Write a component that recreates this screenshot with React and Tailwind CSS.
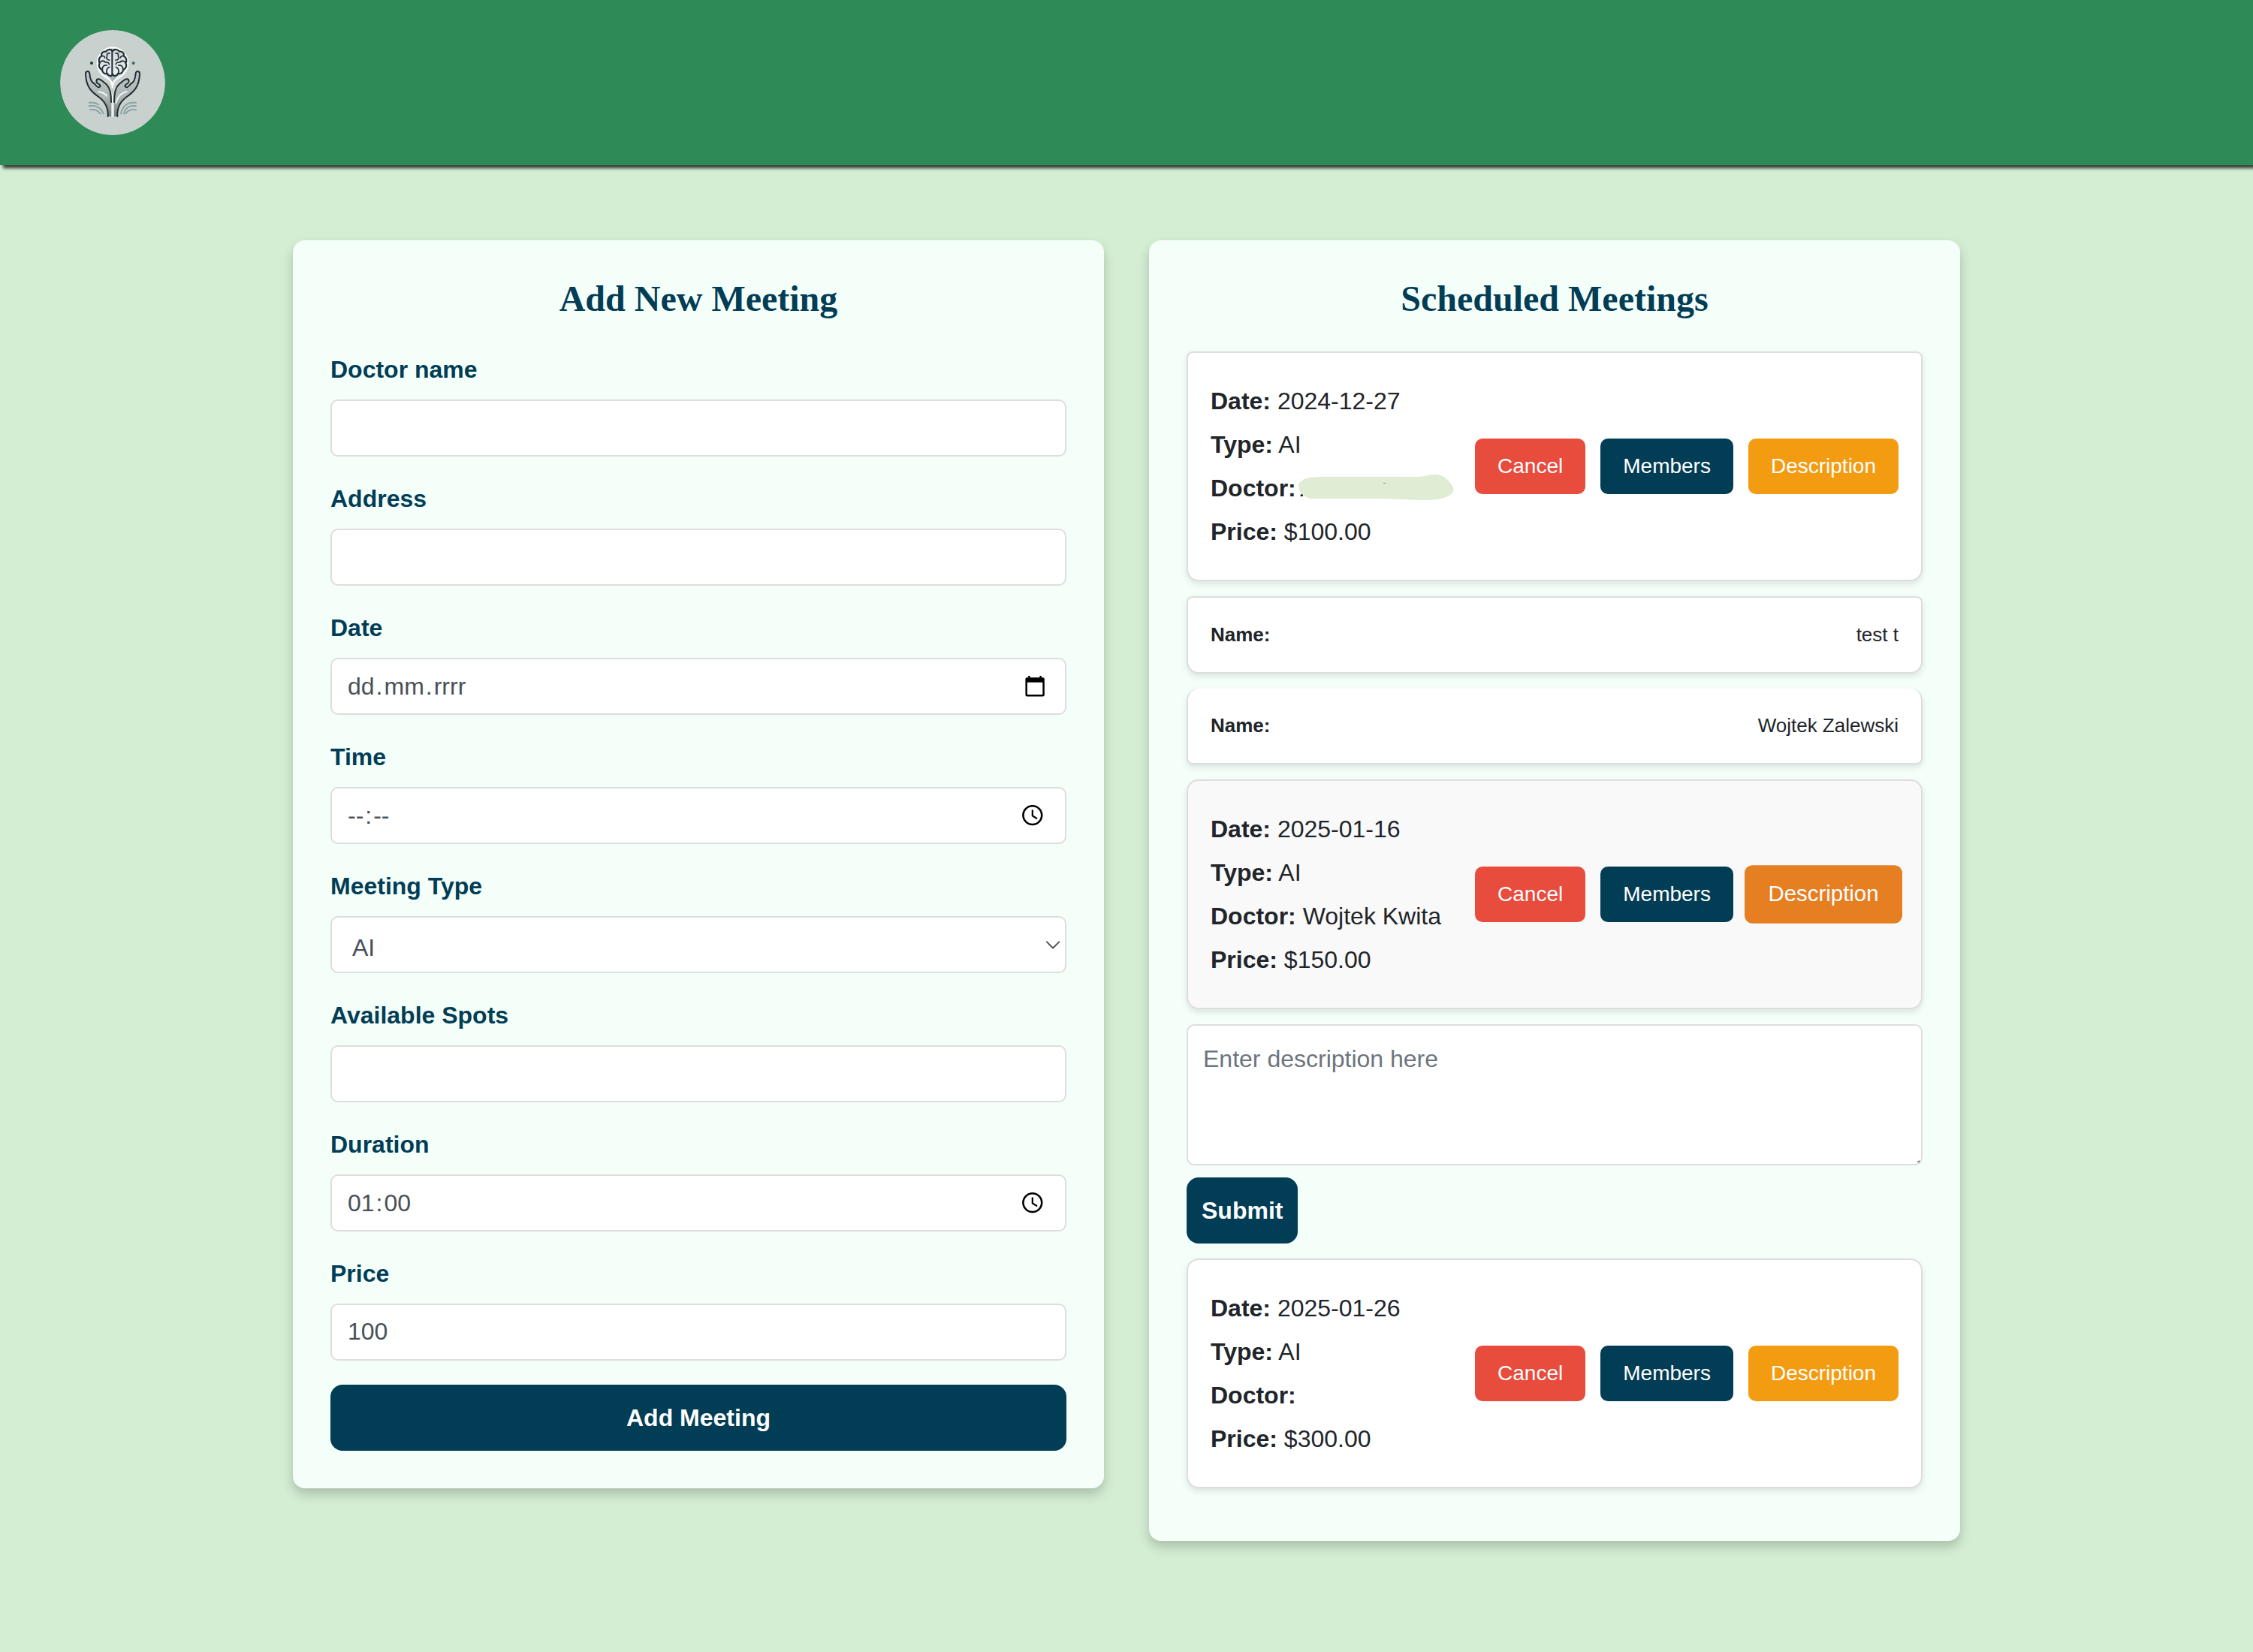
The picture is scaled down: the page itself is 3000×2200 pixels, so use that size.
import React from "react";

function Logo() {
  return (
    <svg viewBox="60 60 420 420" className="block size-[140px] rounded-full" fill="none" strokeLinecap="round" strokeLinejoin="round">
      <defs>
        <linearGradient id="arm" x1="0" y1="0" x2="0" y2="1">
          <stop offset="0" stopColor="#c3cac9" />
          <stop offset="0.6" stopColor="#aab4b3" />
          <stop offset="1" stopColor="#6f7b7c" />
        </linearGradient>
        <linearGradient id="brain" x1="0" y1="0" x2="0" y2="1">
          <stop offset="0" stopColor="#d3d8db" />
          <stop offset="1" stopColor="#eef0f2" />
        </linearGradient>
      </defs>
      <circle cx="270" cy="270" r="210" fill="#c9d1cf" />
      <path d="M270 130C240 130 209 158 209 192C209 226 235 245 252 254C262 261 268 272 269 289C271 272 277 261 288 254C305 245 331 226 331 192C331 158 300 130 270 130Z" fill="#d5dadb" stroke="#fff" strokeWidth="6" />
      <path d="M254 246L286 246L270 266Z" fill="#a9b2bc" />
      <path d="M270 144C262 134 248 137 243 146C231 144 223 153 226 163C214 170 213 184 218 191C213 203 217 215 228 219C229 231 240 237 249 234C254 246 268 245 270 236C272 245 286 246 291 234C300 237 311 231 312 219C323 215 328 203 322 191C328 184 326 170 314 163C317 153 309 144 297 146C292 137 278 134 270 144Z" fill="url(#brain)" stroke="#1d2f36" strokeWidth="6.5" />
      <g stroke="#1d2f36" strokeWidth="5">
        <path d="M268 142V238" strokeWidth="6" />
        <path d="M258 153C249 151 246 158 248 164C243 172 248 181 257 180" />
        <path d="M226 164C233 162 239 166 239 171M218 191C224 181 236 181 241 189C249 187 255 191 256 197M229 218C227 206 236 199 247 201M248 234C243 225 246 212 257 208" />
        <path d="M282 153C291 151 294 158 292 164C297 172 292 181 282 180" />
        <path d="M314 164C307 162 301 166 301 171M322 191C316 181 304 181 299 189C291 187 284 191 283 197M311 218C313 206 304 199 293 201M292 234C297 225 294 212 283 208" />
      </g>
      <circle cx="186" cy="192" r="6" fill="#17343c" />
      <circle cx="353" cy="192" r="6" fill="#41636a" />
      <path d="M250 405C252 375 243 348 214 327C185 306 164 287 162 236C162 222 176 221 178 234C179 252 184 269 199 276L214 289C222 289 224 284 219 278L205 268C198 259 206 250 216 255L245 277C260 291 264 312 264 345V405Z" fill="url(#arm)" />
      <path d="M290 405C288 375 297 348 326 327C355 306 376 287 378 236C378 222 363 221 362 234C361 252 356 269 341 276L326 289C318 289 316 284 321 278L335 268C342 259 334 250 324 255L295 277C280 291 276 312 276 345V405Z" fill="url(#arm)" />
      <path d="M270 320V404" stroke="#eef1f1" strokeWidth="7" />
      <path d="M214 306C229 309 240 314 246 323M284 350C289 328 304 311 326 306" stroke="#f3f5f5" strokeWidth="6" />
      <g stroke="#232c30" strokeWidth="6">
        <path d="M251 405C253 372 243 348 214 327C185 306 164 287 162 236C162 222 176 221 178 234C179 252 184 269 199 276C205 284 211 292 217 288C224 284 219 277 211 274C203 270 203 256 213 256C224 256 234 270 245 277C260 291 264 312 264 348" />
        <path d="M289 405C287 372 297 348 326 327C355 306 376 287 378 236C378 222 363 221 362 234C361 252 356 269 341 276C335 284 329 292 323 288C316 284 321 277 329 274C337 270 337 256 327 256C316 256 306 270 295 277C280 291 276 312 276 348" />
      </g>
      <g stroke="#8ba5a3" strokeWidth="6">
        <path d="M176 350H194C203 351 209 354 214 359M176 363H196C214 366 226 377 233 394M180 378H194C205 379 213 384 220 394" />
        <path d="M363 350H346C322 352 307 371 303 394M363 363H346C332 365 319 375 315 394M363 378H350C338 379 328 385 322 394" />
      </g>
    </svg>
  );
}

const CalendarIcon = () => (
  <svg viewBox="0 0 26 28" className="mr-[27px] h-7 w-[26px]">
    <path d="M4.2 0h2.4v2.2h12.8V0h2.4v2.2h1.9a2.1 2.1 0 0 1 2.1 2.1v21.1a2.1 2.1 0 0 1-2.1 2.1H2.5a2.1 2.1 0 0 1-2.1-2.1V4.3a2.1 2.1 0 0 1 2.1-2.1h1.7zM2.9 8.7v16.2h20.4V8.7z" fill="#000" />
  </svg>
);

const ClockIcon = () => (
  <svg viewBox="0 0 28 28" className="mr-[29px] size-7" fill="none" stroke="#000">
    <circle cx="13.8" cy="13.6" r="12.4" strokeWidth="2.6" />
    <path d="M13.8 6.6V14.4L20 18.2" strokeWidth="2.2" />
  </svg>
);

const ChevronIcon = () => (
  <svg viewBox="0 0 20 12" className="mr-[6px] h-3 w-5" fill="none" stroke="#495057" strokeWidth="1.9" strokeLinecap="round" strokeLinejoin="round">
    <path d="M1.9 2.3L10.1 10.5L18.3 2.3" />
  </svg>
);

const Segments = ({ parts }) => (
  <span className="-ml-px flex pb-px">
    {parts.map((p, i) => (
      <span key={i} className={i % 2 ? "" : "px-[2px]"}>{p}</span>
    ))}
  </span>
);

const fields = [
  { label: "Doctor name" },
  { label: "Address" },
  { label: "Date", content: <Segments parts={["dd", ".", "mm", ".", "rrrr"]} />, icon: <CalendarIcon /> },
  { label: "Time", content: <Segments parts={["--", ":", "--"]} />, icon: <ClockIcon /> },
  { label: "Meeting Type", content: <span className="pt-2 pl-[7px]">AI</span>, icon: <ChevronIcon /> },
  { label: "Available Spots" },
  { label: "Duration", content: <Segments parts={["01", ":", "00"]} />, icon: <ClockIcon /> },
  { label: "Price", content: <span className="pb-0.5 pl-px">100</span> },
];

const Title = ({ children }) => (
  <h2 className="mb-[42px] h-14 text-center font-['Liberation_Serif',serif] text-[48px] leading-[56px] font-bold text-[#023d56]">{children}</h2>
);

const panel = "w-[1080px] rounded-[16px] bg-[#f5fffa] p-[50px] shadow-[0_8px_16px_rgba(0,0,0,0.2)]";

function Redaction() {
  return (
    <svg viewBox="0 0 210 38" className="absolute top-[9px] left-[115px] h-[38px] w-[210px]">
      <path d="M4 31L8 24V31Z" fill="#212529" />
      <path d="M2 15C6 7 18 5 32 5H160C172 5 176 1 186 2C196 3 200 8 204 13C208 18 210 22 207 26C203 32 190 36 172 36C150 36 125 34 100 34H18C10 32 1 26 2 15Z" fill="#e1ecd4" />
      <path d="M115 13.5H118.5" stroke="#9aa592" strokeWidth="1.2" />
    </svg>
  );
}

const Line = ({ label, children }) => (
  <p className="relative whitespace-nowrap"><strong className="font-bold">{label}</strong> {children}</p>
);

const btn = "h-[74px] rounded-[10px] px-[30px] text-[28px] text-white";

function Meeting({ date, doctor, price, rounded = "rounded-[16px]", active }) {
  return (
    <div className={`mb-5 flex h-[306px] items-center justify-between border-2 border-[#ddd] px-[30px] shadow-[0_4px_8px_rgba(0,0,0,0.1)] ${rounded} ${active ? "bg-[#f9f9f9]" : "bg-white"}`}>
      <div className="leading-[58px]">
        <Line label="Date:">{date}</Line>
        <Line label="Type:"><span className="-ml-[1.5px]">AI</span></Line>
        <Line label="Doctor:">{doctor}</Line>
        <Line label="Price:">{price}</Line>
      </div>
      <div className="flex gap-5">
        <button className={`${btn} bg-[#e74c3c]`}>Cancel</button>
        <button className={`${btn} bg-[#023d56]`}>Members</button>
        <button className={`${btn} ${active ? "scale-105 bg-[#e67e22]" : "bg-[#f39c12]"}`}>Description</button>
      </div>
    </div>
  );
}

const Member = ({ name, shape }) => (
  <div className={`mb-5 flex items-center justify-between border-2 border-[#ddd] bg-white px-[30px] pb-0.5 text-[26px] shadow-[0_4px_8px_rgba(0,0,0,0.1)] ${shape}`}>
    <strong className="font-bold">Name:</strong>
    <span>{name}</span>
  </div>
);

export default function App() {
  return (
    <div className="h-[2200px] w-[3000px] overflow-hidden bg-[#d4eed3] font-['Liberation_Sans',Arial,sans-serif] text-[32px] leading-[48px] text-[#212529]">
      <header className="relative flex h-[220px] items-center bg-[#2e8b57] pl-20 shadow-[4px_4px_4px_rgba(0,0,0,0.75)]">
        <Logo />
      </header>
      <main className="flex items-start justify-center gap-[60px] pt-[100px]">
        <section className={panel}>
          <Title>Add New Meeting</Title>
          <form className="flex flex-col gap-8">
            {fields.map((f) => (
              <div key={f.label} className="flex flex-col gap-4">
                <label className="font-bold text-[#023d56]">{f.label}</label>
                <div className="flex h-[76px] items-center justify-between rounded-[10px] border-2 border-[#ddd] bg-white pl-5 text-[#495057]">
                  {f.content}
                  {f.icon}
                </div>
              </div>
            ))}
            <button type="button" className="h-[88px] rounded-[16px] bg-[#023d56] font-bold text-white">Add Meeting</button>
          </form>
        </section>
        <section className={panel}>
          <Title>Scheduled Meetings</Title>
          <Meeting date="2024-12-27" doctor={<Redaction />} price="$100.00" rounded="rounded-t-[8px] rounded-b-[16px]" />
          <Member name="test t" shape="h-[103px] rounded-t-[8px] rounded-b-[16px]" />
          <Member name="Wojtek Zalewski" shape="h-[101px] rounded-t-[16px] rounded-b-[8px] border-t-0" />
          <Meeting date="2025-01-16" doctor="Wojtek Kwita" price="$150.00" active />
          <div className="relative mb-4 h-[188px] rounded-[10px] border-2 border-[#ddd] bg-white px-5 py-5 text-[#6c757d]">
            Enter description here
            <svg viewBox="0 0 4 4" className="absolute right-px bottom-px size-1">
              <path d="M0 2H2V3M2 1H3" stroke="#333" strokeWidth="1.2" fill="none" />
            </svg>
          </div>
          <button className="mb-5 block h-[88px] rounded-[16px] bg-[#023d56] px-5 font-bold text-white">Submit</button>
          <Meeting date="2025-01-26" doctor="" price="$300.00" />
        </section>
      </main>
    </div>
  );
}
